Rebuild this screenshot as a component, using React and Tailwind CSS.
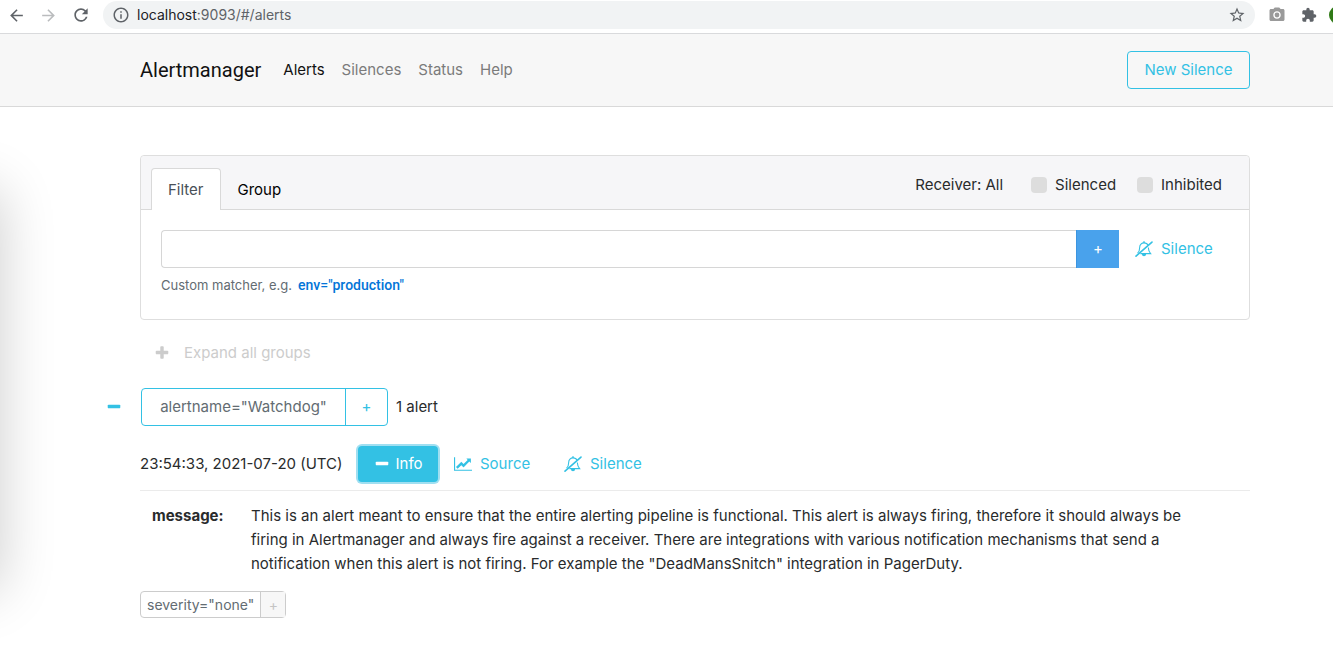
import React from "react";
import { MdArrowBack, MdArrowForward, MdRefresh, MdInfoOutline, MdStarBorder, MdExtension, MdLocalSee } from "react-icons/md";

const CHART =
  "M2048 1536v128h-2048v-1536h128v1408h1920zm-128-1248v435q0 21-19.5 29.5t-35.5-7.5l-121-121-633 633q-10 10-23 10t-23-10l-233-233-416 416-192-192 585-585q10-10 23-10t23 10l233 233 464-464-121-121q-16-16-7.5-35.5t29.5-19.5h435q14 0 23 9t9 23z";
const PLUS =
  "M1600 736v192q0 40-28 68t-68 28h-416v416q0 40-28 68t-68 28h-192q-40 0-68-28t-28-68v-416h-416q-40 0-68-28t-28-68v-192q0-40 28-68t68-28h416v-416q0-40 28-68t68-28h192q40 0 68 28t28 68v416h416q40 0 68 28t28 68z";
const MINUS =
  "M1600 736v192q0 40-28 68t-68 28h-1216q-40 0-68-28t-28-68v-192q0-40 28-68t68-28h1216q40 0 68 28t28 68z";

function Solid({ d }) {
  return (
    <svg viewBox="0 0 1792 1792" className="size-4 shrink-0" fill="currentColor" aria-hidden="true">
      <path d={d} />
    </svg>
  );
}

function BellSlash() {
  return (
    <svg viewBox="0 0 18 16" className="h-4 w-[18px] shrink-0" fill="none" stroke="currentColor" aria-hidden="true">
      <path strokeWidth="1.1" d="M2.6 12.2C4.3 10.6 4.7 8.7 4.7 6.2C4.7 3.6 6.6 1.9 9 1.9C10.9 1.9 12.4 2.8 13 4.3M13.3 6.6C13.4 9 14 10.8 15.6 12.6H5.4" />
      <path strokeWidth="1.4" d="M9 .3V2" />
      <path fill="currentColor" stroke="none" d="M6.9 12.9h4.2a2.1 2.3 0 0 1-4.2 0z" />
      <path strokeWidth="1.6" strokeLinecap="round" d="M1 15.1L17 1.1" />
    </svg>
  );
}

function LineChart() {
  return (
    <svg viewBox="0 0 2048 1792" className="h-4 w-[18px] shrink-0" fill="currentColor" aria-hidden="true">
      <path d={CHART} />
    </svg>
  );
}

function BrowserBar() {
  return (
    <div className="flex h-[34px] items-center overflow-hidden border-b border-[#d9dadc] bg-white pb-[3px] text-[#5f6368]">
      <div className="flex w-[103px] shrink-0 items-center gap-[13px] pl-[7px]">
        <button aria-label="Back"><MdArrowBack className="size-[19px]" /></button>
        <button aria-label="Forward" className="text-[#babcbe]"><MdArrowForward className="size-[19px]" /></button>
        <button aria-label="Reload"><MdRefresh className="size-5" /></button>
      </div>
      <div className="flex h-7 flex-1 items-center rounded-full bg-[#f1f3f4] pr-[9px] pl-[9px]">
        <MdInfoOutline className="mr-[7px] size-[18px] shrink-0" />
        <div className="flex-1 text-[14px] leading-5"><span className="text-[#202124]">localhost</span>:9093/#/alerts</div>
        <button aria-label="Bookmark"><MdStarBorder className="size-[18px]" /></button>
      </div>
      <div className="flex w-[78px] shrink-0 items-center gap-4 pl-[13px]">
        <button aria-label="Camera" className="text-[#9a9a9a]"><MdLocalSee className="size-[18px]" /></button>
        <button aria-label="Extensions" className="-ml-px"><MdExtension className="size-4" /></button>
        <button aria-label="Profile" className="-ml-1 size-[18px] shrink-0 rounded-full bg-[#2f7a16]" />
      </div>
    </div>
  );
}

function Nav() {
  return (
    <header className="flex h-[73px] items-center border-b border-[#d9d9d9] bg-[#f7f7f7] pr-[83px] pl-[140px]">
      <a href="#" className="mr-[22px] font-[Roboto,'Liberation_Sans',sans-serif] text-[20px] text-[#111]">Alertmanager</a>
      <nav className="flex gap-[17px] text-[#7b7b7b]">
        <a href="#alerts" className="text-[#111]">Alerts</a>
        <a href="#silences">Silences</a>
        <a href="#status">Status</a>
        <a href="#help">Help</a>
      </nav>
      <button className="ml-auto h-[38px] w-[123px] rounded border border-[#33c1e4] text-[#33c1e4]">New Silence</button>
    </header>
  );
}

function Check({ label }) {
  return (
    <label className="flex items-center gap-2">
      <input type="checkbox" className="size-4 appearance-none rounded bg-[#ddd]" />
      {label}
    </label>
  );
}

function FilterCard() {
  return (
    <section className="rounded border border-[#dedede]">
      <div className="flex h-[54px] justify-between rounded-t border-b border-[#d9d9d9] bg-[#f6f6f8] pr-[27px] pl-[10px]">
        <div className="-mb-px flex items-end">
          <button className="h-[42px] rounded-t border border-b-0 border-[#d9d9d9] bg-white px-4 text-[#495057]">Filter</button>
          <button className="h-[42px] border border-b-0 border-transparent px-4 text-black">Group</button>
        </div>
        <div className="flex h-[57px] items-center">
          <button className="mr-7">Receiver: All</button>
          <div className="flex gap-[21px]">
            <Check label="Silenced" />
            <Check label="Inhibited" />
          </div>
        </div>
      </div>
      <div className="px-5 pt-5 pb-6">
        <div className="flex items-center">
          <input aria-label="Matcher" className="h-[38px] min-w-0 flex-1 rounded-l border border-r-0 border-[#d6d6d6] bg-white px-3 outline-none" />
          <button className="h-[38px] w-[43px] border-l border-[#3c95e0] bg-[#49a2ec] text-white">+</button>
          <button className="ml-4 flex w-[94px] items-center gap-2 text-[#33c1e4]"><BellSlash />Silence</button>
        </div>
        <p className="mt-[7px] flex items-center gap-[6px] text-[13px] leading-5 text-[#636c72]">
          Custom matcher, e.g.
          <button className="font-[Roboto,'Liberation_Sans',sans-serif] text-[14px] font-medium text-[#0275d8]">env="production"</button>
        </p>
      </div>
    </section>
  );
}

export default function App() {
  return (
    <div className="relative min-h-screen overflow-hidden bg-white font-[Inter,'Liberation_Sans',sans-serif] text-[15px] leading-6 text-[#292b2c]">
      <div className="pointer-events-none absolute top-[190px] -left-24 h-[400px] w-24 shadow-[0_0_56px_rgba(0,0,0,0.2)]" />
      <BrowserBar />
      <Nav />
      <main className="pt-12 pr-[83px] pb-8 pl-[140px]">
        <FilterCard />
        <button className="mt-[21px] ml-[14px] flex items-center gap-[14px] text-[#ccc]"><Solid d={PLUS} />Expand all groups</button>
        <div className="mt-[23px] -ml-[34px] flex items-center">
          <button aria-label="Collapse group" className="mr-[19px] text-[#33c1e4]"><Solid d={MINUS} /></button>
          <div className="flex h-[38px] rounded border border-[#33c1e4]">
            <button className="w-[203px] text-[#636c72]">alertname="Watchdog"</button>
            <button className="w-[42px] border-l border-[#33c1e4] text-[#33c1e4]">+</button>
          </div>
          <span className="ml-2">1 alert</span>
        </div>
        <div className="mt-5 flex items-center border-b border-[#ebebeb] pb-2">
          <time className="w-[210px]">23:54:33, 2021-07-20 (UTC)</time>
          <button className="ml-2 flex h-9 w-20 items-center justify-center gap-[6px] rounded bg-[#33c1e4] text-white ring-2 ring-[#a0dff1]"><Solid d={MINUS} />Info</button>
          <button className="ml-4 flex w-[78px] items-center gap-2 text-[#33c1e4]"><LineChart />Source</button>
          <button className="ml-8 flex items-center gap-2 text-[#33c1e4]"><BellSlash />Silence</button>
        </div>
        <table className="mt-[13px]">
          <tbody>
            <tr className="align-top">
              <th scope="row" className="w-[111px] px-3 text-left font-bold">message:</th>
              <td className="pr-9">
                This is an alert meant to ensure that the entire alerting pipeline is functional. This alert is always firing, therefore it should always be firing in Alertmanager and always fire against a receiver. There are integrations with various notification mechanisms that send a notification when this alert is not firing. For example the "DeadMansSnitch" integration in PagerDuty.
              </td>
            </tr>
          </tbody>
        </table>
        <div className="mt-[15px] inline-flex h-[27px] rounded-sm border border-[#ccc] text-[14px] leading-5">
          <button className="px-[6px] text-[#636c72]">severity="none"</button>
          <button className="w-[25px] border-l border-[#ccc] bg-[#f7f7f7] text-[#c4c4c4]">+</button>
        </div>
      </main>
    </div>
  );
}
